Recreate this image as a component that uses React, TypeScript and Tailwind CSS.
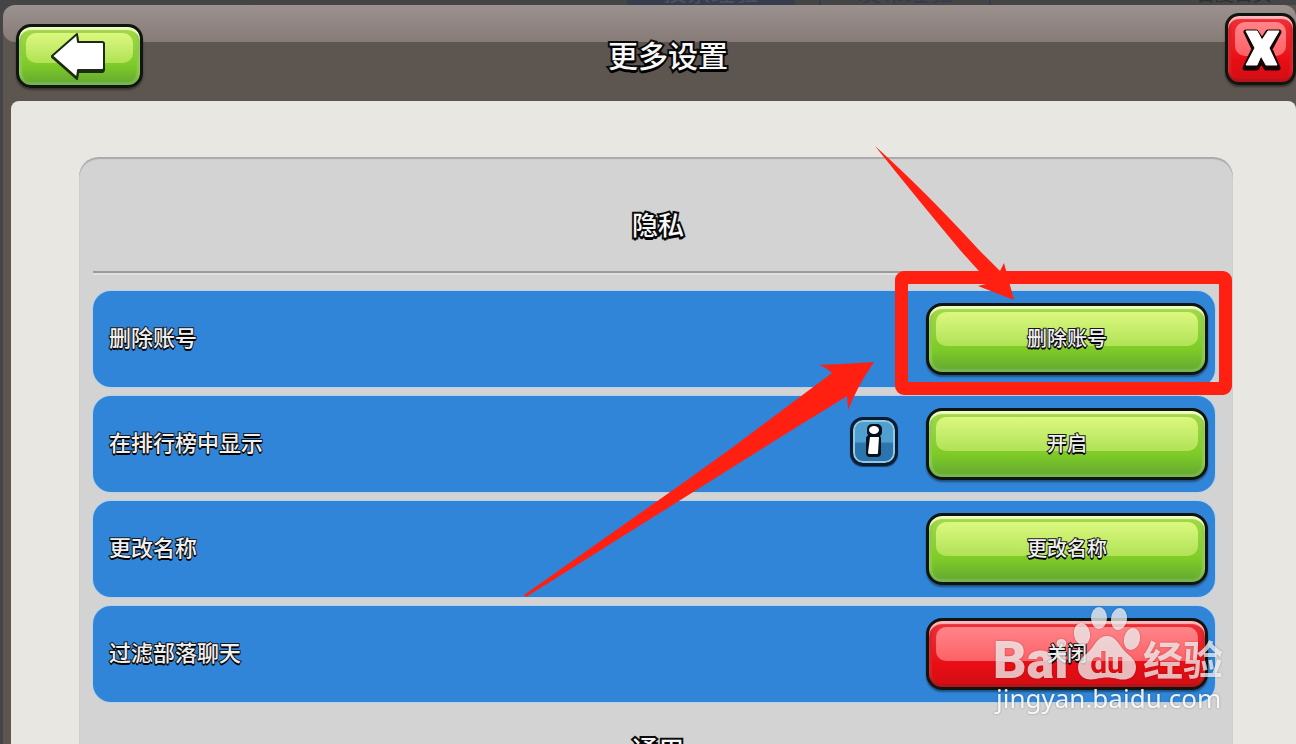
import React, { useState } from "react";
import clsx from "clsx";

interface Setting {
  id: string;
  label: string;
  action: string;
  color: "green" | "red";
  info?: boolean;
  highlighted?: boolean;
}

const settings: Setting[] = [
  { id: "delete", label: "删除账号", action: "删除账号", color: "green", highlighted: true },
  { id: "ranking", label: "在排行榜中显示", action: "开启", color: "green", info: true },
  { id: "rename", label: "更改名称", action: "更改名称", color: "green" },
  { id: "filter", label: "过滤部落聊天", action: "关闭", color: "red" },
];

const outline = "text-[#f8f8f8] [paint-order:stroke_fill] [-webkit-text-stroke:4px_#0c0c0c] [text-shadow:0_3px_0_#000]";
const thinOutline = "text-[#f0f0f0] [paint-order:stroke_fill] [-webkit-text-stroke:2px_#1a1a1a] [text-shadow:0_2px_0_#000]";

const GlossyButton: React.FC<{
  color: "green" | "red";
  className?: string;
  label?: string;
  onClick?: () => void;
  children: React.ReactNode;
}> = ({ color, className, label, onClick, children }) => (
  <button
    type="button"
    aria-label={label}
    onClick={onClick}
    className={clsx(
      "relative shrink-0 flex items-center justify-center border-[3px] border-[#10150f] bg-gradient-to-b",
      color === "green"
        ? "from-[#a4d94a] via-[#7fcb27] via-65% to-[#62a730] shadow-[0_2px_2px_#0006,inset_0_3px_1px_#effcc4,inset_0_-3px_1px_#77b551,inset_3px_0_2px_#8fcb4f,inset_-3px_0_2px_#8fcb4f]"
        : "from-[#ee3038] via-[#e90d14] via-65% to-[#d20e15] shadow-[0_2px_2px_#0006,inset_0_3px_1px_#ffb9bd,inset_0_-3px_1px_#b5141a,inset_3px_0_2px_#d92229,inset_-3px_0_2px_#d92229]",
      className
    )}
  >
    <span
      className={clsx(
        "absolute inset-x-[7px] top-[6px] h-[52%] rounded-[10px] bg-gradient-to-b",
        color === "green" ? "from-[#dcf87f] to-[#b0e256]" : "from-[#ff8489] to-[#fd6167]"
      )}
    />
    <span className="relative">{children}</span>
  </button>
);

const InfoButton = () => (
  <button
    type="button"
    aria-label="说明"
    className="relative mr-7 mb-[6px] flex h-[49px] w-12 shrink-0 items-center justify-center rounded-[13px] border-[3px] border-[#0b1c2e] bg-gradient-to-b from-[#4f9fd0] from-50% to-[#2c74ad] to-55% shadow-[0_1px_1px_#0008,inset_0_0_0_2px_#8fc9e6]"
  >
    <svg viewBox="0 0 24 36" className="h-9 w-6">
      <g fill="#06101a">
        <rect x="4" y="12" width="15" height="22" rx="4" />
        <rect x="5" y="1" width="15" height="13" rx="5" />
      </g>
      <g fill="#fff">
        <path d="M8 14 H17 L16 30 Q16 31 15 31 H8 Q6 31 6 30 Z" />
        <ellipse cx="12" cy="7" rx="5" ry="4" />
      </g>
    </svg>
  </button>
);

// Red frame and arrows pointing at the delete button
const Highlight = () => (
  <>
    <div className="pointer-events-none absolute -top-8 -right-6 -bottom-5 -left-[31px] z-10 rounded-[9px] border-[13px] border-[#ff2011]" />
    <svg viewBox="520 140 500 460" className="pointer-events-none absolute -top-[163px] -left-[406px] z-10 h-[460px] w-[500px]" fill="#ff2011">
      <path d="M524 595 L690 478 L733 447 L832 373 Q827 368 819 365 Q846 364 874 362 Q858 385 848 410 L847 396 Q825 410 800 425 L690 494 L526 597 Z" />
      <path d="M875 146 Q925 191 979 250 L1000 271 L1004 263 L1014 300 L978 286 L990 283 L978 270 L960 250 Q915 196 875 146 Z" />
    </svg>
  </>
);

const SettingRow: React.FC<{ setting: Setting }> = ({ setting }) => (
  <li className="flex h-24 items-center rounded-[18px] bg-[#3185d8] pr-[7px] pl-4 shadow-[0_0_0_1px_#b4d2ea]">
    <span className={clsx("flex-1 pb-[6px] text-[22px] leading-8 font-medium", thinOutline)}>{setting.label}</span>
    {setting.info && <InfoButton />}
    <div className="relative">
      <GlossyButton color={setting.color} className="h-[72px] w-[282px] rounded-2xl">
        <span className={clsx("block pb-[2px] text-[20px] leading-8 font-medium", thinOutline)}>{setting.action}</span>
      </GlossyButton>
      {setting.highlighted && <Highlight />}
    </div>
  </li>
);

const SectionTitle: React.FC<{ children: React.ReactNode }> = ({ children }) => (
  <h2 className={clsx("flex h-[94px] items-center justify-center pl-2 text-[26px] leading-none font-medium", outline)}>
    {children}
  </h2>
);

const Watermark = () => (
  <div className="pointer-events-none absolute right-[66px] bottom-6 z-20 h-[120px] w-[240px]">
    <svg viewBox="990 600 240 120" className="h-full w-full drop-shadow-[0_0_1px_#0005]" fill="#fff" role="img" aria-label="Baidu 经验">
      <mask id="paw">
        <rect x="990" y="600" width="240" height="120" fill="#fff" />
        <text x="1107" y="673" textAnchor="middle" fontSize="30" fontWeight="700" fill="#000" className="font-[Roboto,sans-serif]">du</text>
      </mask>
      <g opacity="0.72">
        <text x="993" y="678" fontSize="52" fontWeight="900" className="font-[Roboto,sans-serif]">Bai</text>
        <g mask="url(#paw)">
          <ellipse cx="1099" cy="618" rx="8" ry="11" />
          <ellipse cx="1119" cy="619" rx="8" ry="11" transform="rotate(8 1119 619)" />
          <ellipse cx="1082" cy="634" rx="8" ry="11" transform="rotate(-10 1082 634)" />
          <ellipse cx="1132" cy="639" rx="8" ry="11" transform="rotate(12 1132 639)" />
          <path d="M1107 636 C1115 636 1118 643 1122 648 C1127 655 1136 658 1136 667 C1136 678 1127 681 1118 679 C1110 677 1104 677 1096 679 C1086 681 1078 677 1078 667 C1078 658 1087 655 1092 648 C1096 643 1099 636 1107 636 Z" />
        </g>
        <text x="1143" y="675" fontSize="40" fontWeight="700" className="font-['Noto_Sans_CJK_SC',sans-serif]">经验</text>
      </g>
      <text x="996" y="708" fontSize="26" opacity="0.9" className="font-['Noto_Sans',sans-serif]">jingyan.baidu.com</text>
    </svg>
  </div>
);

export default function App() {
  const [open, setOpen] = useState(true);

  return (
    <div className="relative flex h-screen flex-col overflow-hidden bg-[#454545] font-['Noto_Sans_CJK_SC',sans-serif]">
      {/* Page behind the dialog */}
      <nav className="flex h-[5px] shrink-0 items-end justify-end overflow-hidden pr-6 text-2xl leading-7 text-[#333a50]">
        <a href="#vote" className="mr-6 w-[168px] bg-[#383d4d] text-center text-[#4c5162]">投票经验</a>
        <a href="#publish" className="mr-[205px] w-[172px] border-x-2 border-[#373c50] text-center">发布经验</a>
        <a href="#home" className="text-[19px] leading-6 text-[#2e2e2e]">百度首页</a>
      </nav>

      {open && (
        <main className="ml-[3px] flex min-h-0 flex-1 flex-col rounded-tl-xl bg-[#5c5550]">
          <header className="relative flex h-24 shrink-0 items-start">
            <div className="absolute inset-x-0 top-0 h-[37px] rounded-l-xl rounded-tr-xl bg-gradient-to-b from-[#9b918e] to-[#867b77]" />
            <GlossyButton color="green" label="返回" className="mt-[19px] ml-[13px] h-16 w-[127px] rounded-[15px]">
              <svg viewBox="0 0 56 48" className="mr-1 h-12 w-14" fill="#fff" stroke="#1d2b12" strokeWidth="2" strokeLinejoin="round">
                <path d="M2 25 L27 3 L28 11 L52 11 Q54 11 54 13 V37 Q54 40 52 40 H28 L27 47 Z" fill="#1d2b12" />
                <path d="M2 24 L27 2 L28 10 H52 Q54 10 54 12 V36 Q54 38 52 38 H28 L27 46 Z" />
              </svg>
            </GlossyButton>
            <h1 className={clsx("relative mt-[31px] flex-1 pr-8 text-center text-[30px] leading-9 font-medium", outline)}>更多设置</h1>
            <GlossyButton color="red" label="关闭窗口" onClick={() => setOpen(false)} className="mt-2 h-[72px] w-[71px] rounded-[14px]">
              <svg viewBox="0 0 40 44" className="h-11 w-10 translate-x-px" strokeLinejoin="round">
                <path d="M4 5 H14 L20 14 L26 5 H37 L28 22 L36 41 H24 L19 33 L15 41 H3 L12 22 Z" fill="#160505" stroke="#160505" strokeWidth="5" />
                <path d="M4 4 H15 L20 13 L26 4 H37 L27 21 L35 38 H24 L19 29 L15 38 H4 L13 21 Z" fill="#fff" stroke="#fff" strokeWidth="1" />
              </svg>
            </GlossyButton>
          </header>

          <div className="ml-2 flex min-h-0 flex-1 flex-col rounded-t-lg bg-[#e8e7e1] pt-14 pr-[63px] pl-[68px]">
            <div className="flex-1 rounded-t-[20px] bg-[#d3d3d3] pt-5 pr-[18px] pl-[14px] shadow-[inset_0_2px_1px_#aaa]">
              <section>
                <SectionTitle>隐私</SectionTitle>
                <hr className="h-[2px] border-0 bg-[#9b9b9b] shadow-[0_2px_0_#e0e0de]" />
                <ul className="mt-[18px] flex flex-col gap-[9px]">
                  {settings.map((s) => (
                    <SettingRow key={s.id} setting={s} />
                  ))}
                </ul>
              </section>
              <section>
                <SectionTitle>通用</SectionTitle>
              </section>
            </div>
          </div>
        </main>
      )}

      <Watermark />
    </div>
  );
}
